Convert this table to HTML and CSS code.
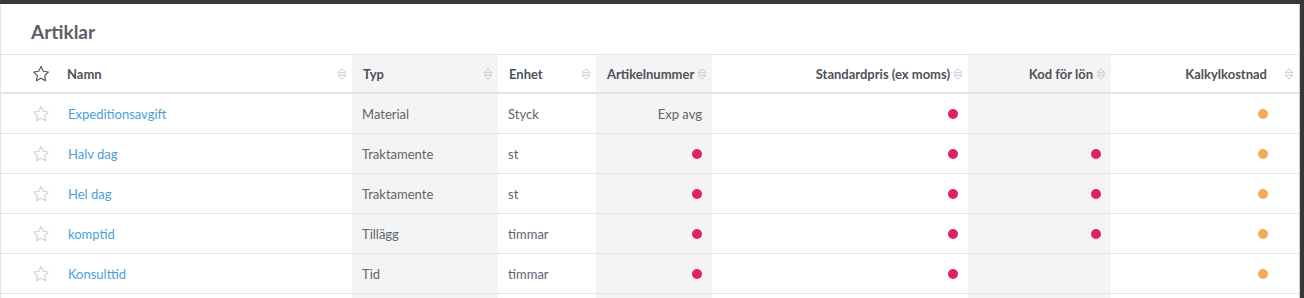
FILE: index.html
```html
<!DOCTYPE html>
<html lang="sv">
<head>
<meta charset="utf-8">
<title>Artiklar</title>
<link rel="stylesheet" href="styles.css">
</head>
<body>
<svg width="0" height="0" class="defs">
  <defs>
    <symbol id="star" viewBox="0 0 18 18">
      <path d="M9 1.6l2.25 4.7 5.1.7-3.7 3.6.9 5.1L9 13.3l-4.55 2.4.9-5.1-3.7-3.6 5.1-.7z" fill="none" stroke="currentColor" stroke-width="1.1" stroke-linejoin="round"/>
    </symbol>
    <symbol id="sort" viewBox="0 0 10 14">
      <path d="M1.2 5.8L5 1.8l3.8 4z M1.2 8.2L5 12.2l3.8-4z" fill="none" stroke="currentColor" stroke-width="1" stroke-linejoin="round"/>
    </symbol>
  </defs>
</svg>
<div class="card">
  <h1 class="title">Artiklar</h1>
  <table class="grid">
    <colgroup>
      <col class="c-star"><col class="c-name"><col class="c-typ"><col class="c-enhet"><col class="c-nr"><col class="c-pris"><col class="c-kod"><col class="c-kalk">
    </colgroup>
    <thead>
      <tr>
        <th class="star-cell"><svg class="star dark"><use href="#star"/></svg></th>
        <th><div class="th left"><span>Namn</span><svg class="sort"><use href="#sort"/></svg></div></th>
        <th class="shade"><div class="th left"><span>Typ</span><svg class="sort"><use href="#sort"/></svg></div></th>
        <th><div class="th left"><span>Enhet</span><svg class="sort"><use href="#sort"/></svg></div></th>
        <th class="shade"><div class="th right"><span>Artikelnummer</span><svg class="sort"><use href="#sort"/></svg></div></th>
        <th><div class="th right"><span>Standardpris (ex moms)</span><svg class="sort"><use href="#sort"/></svg></div></th>
        <th class="shade"><div class="th right"><span>Kod för lön</span><svg class="sort"><use href="#sort"/></svg></div></th>
        <th><div class="th right last"><span>Kalkylkostnad</span><svg class="sort"><use href="#sort"/></svg></div></th>
      </tr>
    </thead>
    <tbody>
      <tr>
        <td class="star-cell"><svg class="star"><use href="#star"/></svg></td>
        <td class="name"><a href="#">Expeditionsavgift</a></td>
        <td class="shade">Material</td>
        <td>Styck</td>
        <td class="shade num">Exp avg</td>
        <td class="num"><span class="dot pink"></span></td>
        <td class="shade num"></td>
        <td class="num last"><span class="dot orange"></span></td>
      </tr>
      <tr>
        <td class="star-cell"><svg class="star"><use href="#star"/></svg></td>
        <td class="name"><a href="#">Halv dag</a></td>
        <td class="shade">Traktamente</td>
        <td>st</td>
        <td class="shade num"><span class="dot pink"></span></td>
        <td class="num"><span class="dot pink"></span></td>
        <td class="shade num"><span class="dot pink"></span></td>
        <td class="num last"><span class="dot orange"></span></td>
      </tr>
      <tr>
        <td class="star-cell"><svg class="star"><use href="#star"/></svg></td>
        <td class="name"><a href="#">Hel dag</a></td>
        <td class="shade">Traktamente</td>
        <td>st</td>
        <td class="shade num"><span class="dot pink"></span></td>
        <td class="num"><span class="dot pink"></span></td>
        <td class="shade num"><span class="dot pink"></span></td>
        <td class="num last"><span class="dot orange"></span></td>
      </tr>
      <tr>
        <td class="star-cell"><svg class="star"><use href="#star"/></svg></td>
        <td class="name"><a href="#">komptid</a></td>
        <td class="shade">Tillägg</td>
        <td>timmar</td>
        <td class="shade num"><span class="dot pink"></span></td>
        <td class="num"><span class="dot pink"></span></td>
        <td class="shade num"><span class="dot pink"></span></td>
        <td class="num last"><span class="dot orange"></span></td>
      </tr>
      <tr>
        <td class="star-cell"><svg class="star"><use href="#star"/></svg></td>
        <td class="name"><a href="#">Konsulttid</a></td>
        <td class="shade">Tid</td>
        <td>timmar</td>
        <td class="shade num"><span class="dot pink"></span></td>
        <td class="num"><span class="dot pink"></span></td>
        <td class="shade num"></td>
        <td class="num last"><span class="dot orange"></span></td>
      </tr>
      <tr>
        <td class="star-cell"></td>
        <td class="name"></td>
        <td class="shade"></td>
        <td></td>
        <td class="shade num"></td>
        <td class="num"></td>
        <td class="shade num"></td>
        <td class="num last"></td>
      </tr>
    </tbody>
  </table>
</div>
</body>
</html>
```

FILE: styles.css
```css
html, body {
  margin: 0;
  padding: 0;
}
body {
  background: #383838;
  font-family: Lato, "Open Sans", Arial, sans-serif;
  font-size: 13px;
  color: #60656a;
  overflow: hidden;
  height: 298px;
}
.defs {
  position: absolute;
  width: 0;
  height: 0;
}
.card {
  margin: 4px 4px 0 0;
  background: #fff;
  border-left: 1px solid #e4e4e4;
  border-right: 1px solid #d2d2d2;
  height: 400px;
}
.title {
  margin: 0;
  height: 50px;
  box-sizing: border-box;
  padding: 17px 0 0 30px;
  font-size: 19px;
  font-weight: 700;
  color: #585f67;
  line-height: 22px;
}
.grid {
  width: 100%;
  table-layout: fixed;
  border-collapse: collapse;
  border-top: 1px solid #e3e5e9;
}
.c-star { width: 55px; }
.c-name { width: 296px; }
.c-typ { width: 146px; }
.c-enhet { width: 98px; }
.c-nr { width: 116px; }
.c-pris { width: 256px; }
.c-kod { width: 143px; }
.c-kalk { width: auto; }
th {
  height: 37px;
  padding: 0;
  font-weight: 700;
  color: #4d525a;
  text-align: left;
  border-bottom: 2px solid #e1e3e7;
}
td {
  height: 39px;
  padding: 0 10px;
  border-bottom: 1px solid #e3e5e9;
  white-space: nowrap;
}
.shade {
  background: #f4f4f4;
}
.star-cell {
  padding: 0 0 0 31px;
  line-height: 0;
}
.star {
  width: 18px;
  height: 18px;
  color: #cfd1d4;
}
.star.dark {
  color: #4e535a;
}
.th {
  display: flex;
  align-items: center;
  padding: 0 5px 0 11px;
}
.th span {
  flex: 1;
}
.th.right span {
  text-align: right;
}
.th.last span {
  padding-right: 14px;
}
.sort {
  width: 10px;
  height: 14px;
  margin-left: 3px;
  color: #c6c9cd;
  flex: none;
}
.name {
  padding-left: 12px;
}
.name a {
  color: #4a9fdb;
  text-decoration: none;
}
.num {
  text-align: right;
}
td.last {
  padding-right: 31px;
}
.dot {
  display: inline-block;
  width: 10px;
  height: 10px;
  border-radius: 50%;
  vertical-align: 0;
}
.pink { background: #e2225f; }
.orange { background: #f6a95c; }
```
